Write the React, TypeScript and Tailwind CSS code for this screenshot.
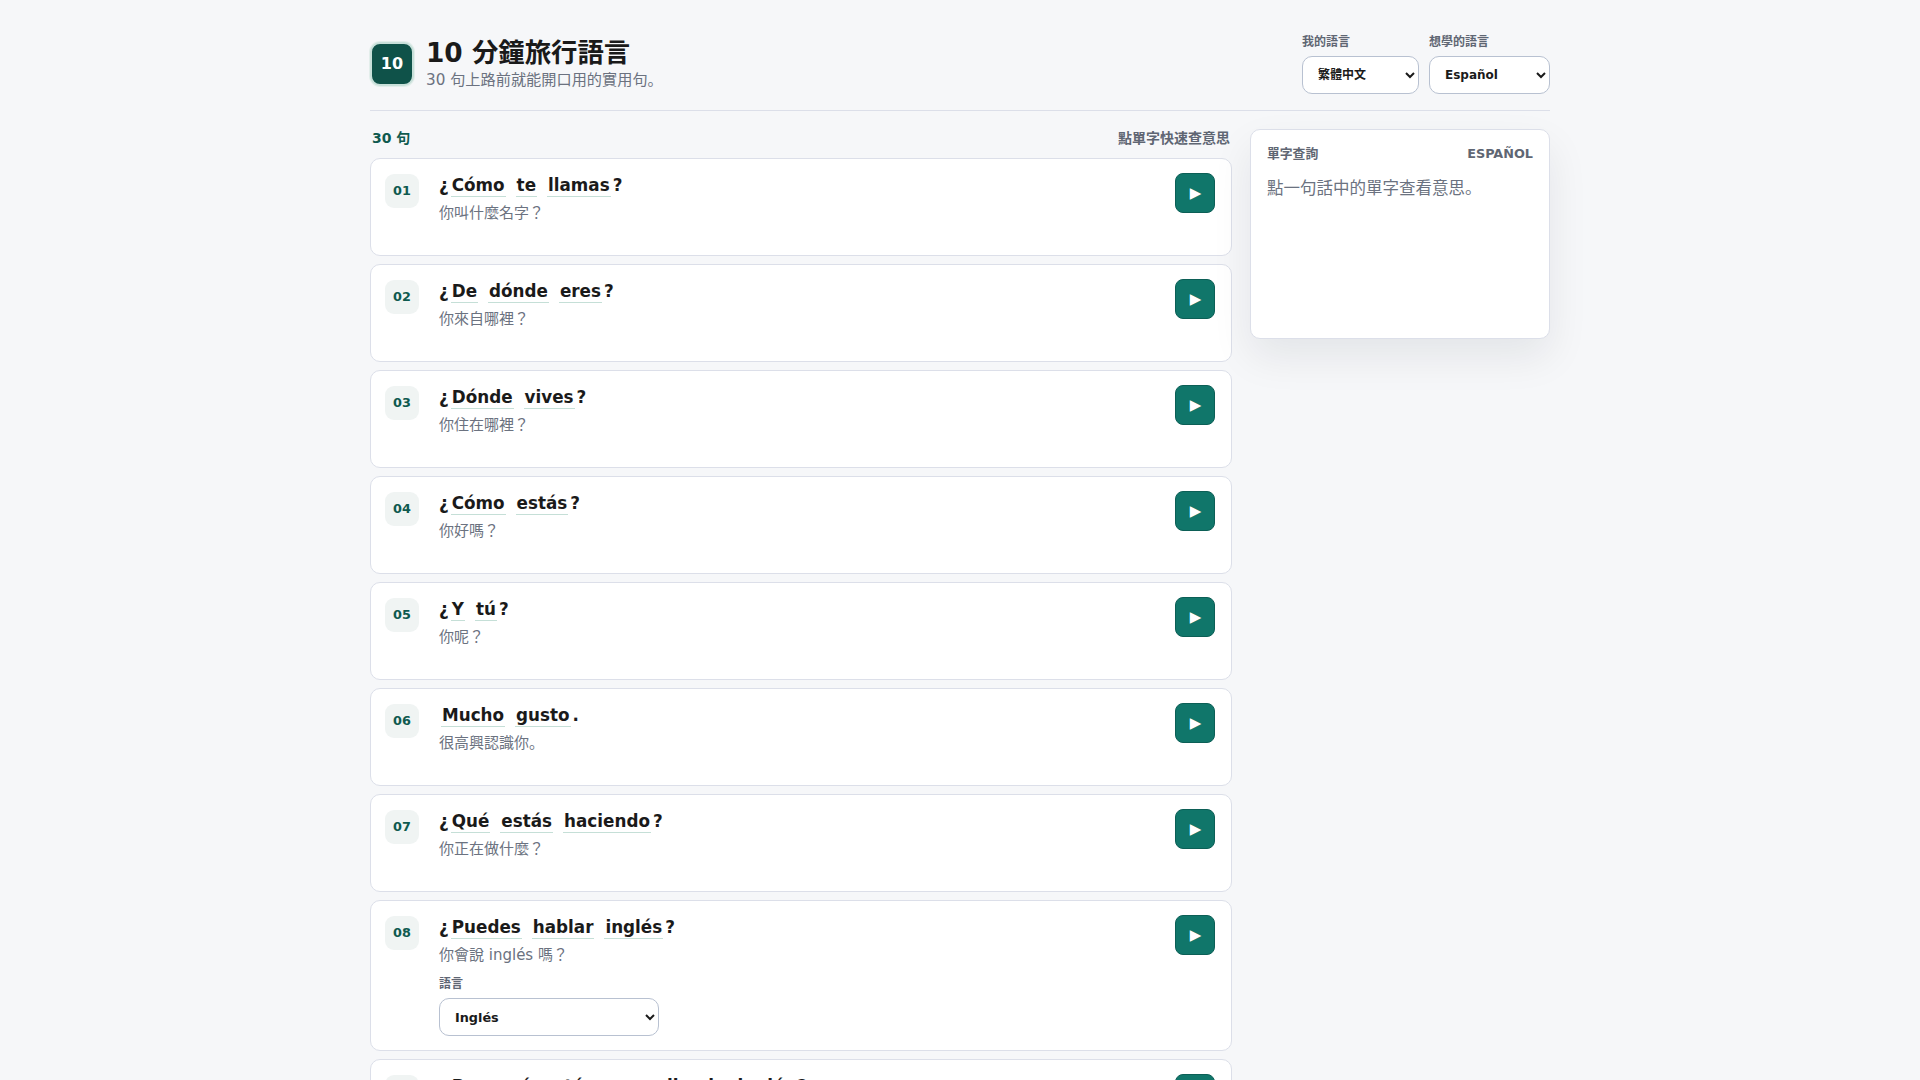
const sans = "font-['DejaVu_Sans','Noto_Sans_CJK_JP',sans-serif]";

type Row = { n: string; pre: string; words: string[]; post: string; tr: string; lang?: boolean };

const rows: Row[] = [
  { n: "01", pre: "¿", words: ["Cómo", "te", "llamas"], post: "?", tr: "你叫什麼名字？" },
  { n: "02", pre: "¿", words: ["De", "dónde", "eres"], post: "?", tr: "你來自哪裡？" },
  { n: "03", pre: "¿", words: ["Dónde", "vives"], post: "?", tr: "你住在哪裡？" },
  { n: "04", pre: "¿", words: ["Cómo", "estás"], post: "?", tr: "你好嗎？" },
  { n: "05", pre: "¿", words: ["Y", "tú"], post: "?", tr: "你呢？" },
  { n: "06", pre: "", words: ["Mucho", "gusto"], post: ".", tr: "很高興認識你。" },
  { n: "07", pre: "¿", words: ["Qué", "estás", "haciendo"], post: "?", tr: "你正在做什麼？" },
  { n: "08", pre: "¿", words: ["Puedes", "hablar", "inglés"], post: "?", tr: "你會說 inglés 嗎？", lang: true },
  { n: "09", pre: "¿", words: ["Por", "qué", "estás", "aprendiendo", "inglés"], post: "?", tr: "" },
];

function Card({ r }: { r: Row }) {
  return (
    <div className="flex items-start gap-5 rounded-[10px] border border-[#dcdfe9] bg-white pl-[14px] pr-4 pt-[14px] pb-[14px] min-h-[98px]">
      <div className="mt-px flex h-[34px] w-[34px] shrink-0 items-center justify-center rounded-[9px] bg-[#f0f4f3] text-[12.8px] font-bold text-[#0f5a4f]">
        {r.n}
      </div>
      <div className="min-w-0 flex-1">
        <div className="flex items-baseline text-[16.8px] font-bold leading-[24px] text-[#1a1a1a]">
          {r.pre && <span>{r.pre}</span>}
          {r.words.map((w, i) => (
            <span key={w} className={`ml-[2px] border-b border-[#c5dfd7] px-px leading-[22px] ${i < r.words.length - 1 ? "mr-[8px]" : "mr-0"}`}>
              {w}
            </span>
          ))}
          <span className="ml-[2px]">{r.post}</span>
        </div>
        <div className="mt-[5px] text-[15px] leading-[22px] text-[#6b7280]">{r.tr}</div>
        {r.lang && (
          <div className="mt-[9px]">
            <div className="text-xs font-semibold leading-[18px] text-[#5f6673]">語言</div>
            <select className="mt-[5px] block h-[38px] w-[220px] rounded-[10px] border border-[#b8c1d1] bg-white px-[11px] text-[12.8px] font-bold text-[#1a1a1a]">
              <option>Inglés</option>
            </select>
          </div>
        )}
      </div>
      <button className="flex h-10 w-10 shrink-0 items-center justify-center rounded-lg border border-[#0c5f56] bg-[#10766a] pl-px text-[15px] text-white">
        ▶
      </button>
    </div>
  );
}

export default function App() {
  return (
    <div className={`min-h-screen bg-[#f6f7f9] ${sans}`}>
      <div className="mx-auto w-[1180px] pt-[32px]">
        <header className="flex items-center justify-between border-b border-[#dcdfe9] pb-4">
          <div className="flex items-center gap-3">
            <div className="mt-px flex h-11 w-11 items-center justify-center rounded-[10px] border-2 border-[#c8e0da] bg-[#0f5249] text-base font-bold text-white ring-1 ring-[#e3eeeb]">
              10
            </div>
            <div className="pt-px">
              <h1 className="text-[26.4px] font-bold leading-[30px] text-[#1a1a1a]">10 分鐘旅行語言</h1>
              <p className="mt-[2px] text-[15.2px] leading-[20px] text-[#6b7280]">30 句上路前就能開口用的實用句。</p>
            </div>
          </div>
          <div className="flex gap-[10px]">
            <label className="block">
              <span className="mt-px block text-xs font-semibold leading-[18px] text-[#5f6673]">我的語言</span>
              <select className="mt-[5px] block h-[38px] w-[117px] rounded-[10px] border border-[#b8c1d1] bg-white px-[11px] text-xs font-bold text-[#1a1a1a]">
                <option>繁體中文</option>
              </select>
            </label>
            <label className="block">
              <span className="mt-px block text-xs font-semibold leading-[18px] text-[#5f6673]">想學的語言</span>
              <select className="mt-[5px] block h-[38px] w-[121px] rounded-[10px] border border-[#b8c1d1] bg-white px-[11px] text-xs font-bold text-[#1a1a1a]">
                <option>Español</option>
              </select>
            </label>
          </div>
        </header>
        <div className="mt-[18px] flex items-start gap-[18px]">
          <main className="w-[862px] shrink-0">
            <div className="-mt-px flex items-center justify-between px-[2px] pb-[10px]">
              <span className="text-sm font-bold leading-[20px] text-[#0f5a4f]">30 句</span>
              <span className="text-sm font-semibold leading-[20px] text-[#5f6673]">點單字快速查意思</span>
            </div>
            <div className="flex flex-col gap-2">
              {rows.map((r) => (
                <Card key={r.n} r={r} />
              ))}
            </div>
          </main>
          <aside className="h-[210px] w-[300px] rounded-[10px] border border-[#dcdfe9] bg-white px-4 pt-[14px] shadow-[0_18px_40px_rgba(15,23,42,0.08)]">
            <div className="flex items-center justify-between">
              <span className="text-[12.8px] font-semibold text-[#5f6673]">單字查詢</span>
              <span className="text-[12.8px] font-bold text-[#5f6673]">ESPAÑOL</span>
            </div>
            <p className="mt-[14px] text-[16.5px] leading-[24px] text-[#6b7280]">點一句話中的單字查看意思。</p>
          </aside>
        </div>
      </div>
    </div>
  );
}
